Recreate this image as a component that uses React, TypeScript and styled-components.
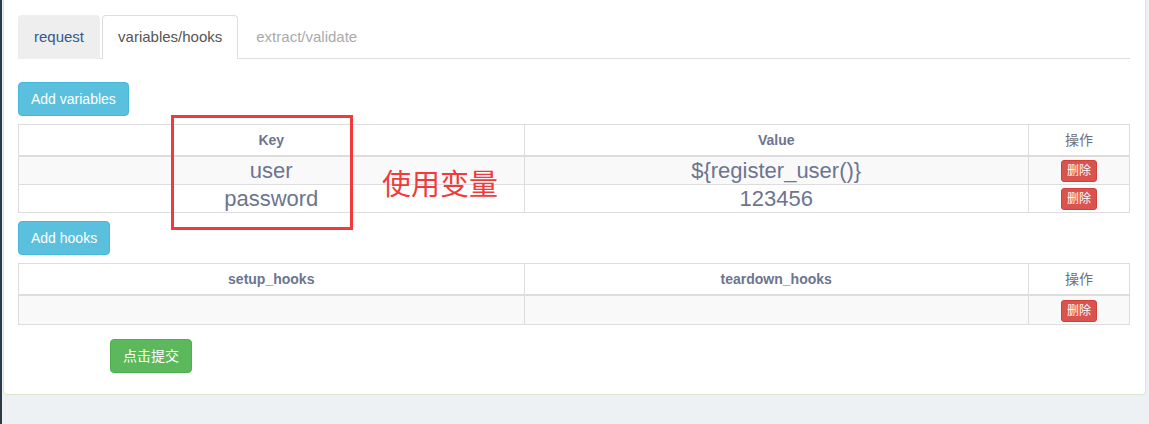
import React from 'react';
import styled, { createGlobalStyle } from 'styled-components';

const GlobalStyle = createGlobalStyle`
  html, body {
    margin: 0;
    padding: 0;
    background: #edf1f4;
  }
  body {
    font-family: "Liberation Sans", Arial, "Noto Sans CJK SC", sans-serif;
    font-size: 14px;
    line-height: 1.42857;
    color: #73879c;
  }
  * {
    box-sizing: border-box;
  }
`;

const Page = styled.div`
  position: relative;
  display: flex;
  width: 1149px;
  height: 424px;
  overflow: hidden;
`;

const Sidebar = styled.div`
  width: 2px;
  flex-shrink: 0;
  background: #2a3a47;
`;

const Main = styled.div`
  flex: 1;
  padding: 0 3px 0 1px;
`;

const Panel = styled.div`
  background: #fff;
  border: 1px solid #dbe6d0;
  border-top: none;
  border-radius: 0 0 4px 4px;
  padding: 15px 15px 21px 14px;
`;

const TabBar = styled.ul`
  display: flex;
  margin: 0;
  padding: 0;
  list-style: none;
  border-bottom: 1px solid #ddd;
`;

const Tab = styled.li<{ $state: 'idle' | 'active' | 'muted' }>`
  margin-right: 2px;
  margin-bottom: -1px;
  padding: 10px 15px;
  font-size: 15px;
  line-height: 22px;
  border: 1px solid ${(p) => (p.$state === 'active' ? '#ddd' : 'transparent')};
  border-bottom-color: ${(p) => (p.$state === 'active' ? '#fff' : 'transparent')};
  border-radius: 4px 4px 0 0;
  background: ${(p) => (p.$state === 'idle' ? '#eee' : p.$state === 'active' ? '#fff' : 'transparent')};
  color: ${(p) => (p.$state === 'idle' ? '#35598a' : p.$state === 'active' ? '#555' : '#aaa')};
`;

const TabContent = styled.div`
  padding-top: 23px;
`;

const Button = styled.button<{ $tone: 'info' | 'success' }>`
  display: block;
  height: 34px;
  padding: 6px 12px;
  font-family: inherit;
  font-size: 14px;
  line-height: 20px;
  color: #fff;
  border-radius: 4px;
  border: 1px solid ${(p) => (p.$tone === 'info' ? '#46b8da' : '#4cae4c')};
  background: ${(p) => (p.$tone === 'info' ? '#5bc0de' : '#5cb85c')};
  margin-bottom: 8px;
`;

const SubmitButton = styled(Button)`
  margin: 14px 0 0 92px;
`;

const Table = styled.table`
  width: 100%;
  table-layout: fixed;
  border-collapse: collapse;
  border: 1px solid #ddd;
  margin-bottom: 8px;
  text-align: center;

  th {
    padding: 5px;
    line-height: 20px;
    font-size: 14px;
    font-weight: bold;
    color: #6c7590;
    border: 1px solid #ddd;
    border-bottom-width: 2px;
  }
  th.op {
    font-weight: normal;
    color: #6a7080;
  }
  td {
    padding: 2px 5px;
    line-height: 22px;
    font-size: 22px;
    color: #6c7590;
    border: 1px solid #ddd;
  }
  tbody tr:nth-child(odd) td {
    background: #f9f9f9;
  }
`;

const DeleteButton = styled.span`
  display: inline-block;
  vertical-align: middle;
  padding: 1px 5px;
  font-size: 12px;
  line-height: 18px;
  color: #fff;
  background: #d9534f;
  border: 1px solid #d43f3a;
  border-radius: 3px;
`;

const Highlight = styled.div`
  position: absolute;
  left: 171px;
  top: 115px;
  width: 182px;
  height: 115px;
  border: 3px solid #f23a3a;
`;

const Note = styled.div`
  position: absolute;
  left: 382px;
  top: 167px;
  font-size: 29px;
  line-height: 36px;
  color: #f23a3a;
`;

const variables = [
  { key: 'user', value: '${register_user()}' },
  { key: 'password', value: '123456' },
];

function Cols() {
  return (
    <colgroup>
      <col style={{ width: '45.5%' }} />
      <col style={{ width: '45.4%' }} />
      <col />
    </colgroup>
  );
}

export default function App() {
  return (
    <>
      <GlobalStyle />
      <Page>
        <Sidebar />
        <Main>
          <Panel>
            <TabBar>
              <Tab $state="idle">request</Tab>
              <Tab $state="active">variables/hooks</Tab>
              <Tab $state="muted">extract/validate</Tab>
            </TabBar>
            <TabContent>
              <Button $tone="info">Add variables</Button>
              <Table>
                <Cols />
                <thead>
                  <tr>
                    <th>Key</th>
                    <th>Value</th>
                    <th className="op">操作</th>
                  </tr>
                </thead>
                <tbody>
                  {variables.map((v) => (
                    <tr key={v.key}>
                      <td>{v.key}</td>
                      <td>{v.value}</td>
                      <td>
                        <DeleteButton>删除</DeleteButton>
                      </td>
                    </tr>
                  ))}
                </tbody>
              </Table>
              <Button $tone="info">Add hooks</Button>
              <Table>
                <Cols />
                <thead>
                  <tr>
                    <th>setup_hooks</th>
                    <th>teardown_hooks</th>
                    <th className="op">操作</th>
                  </tr>
                </thead>
                <tbody>
                  <tr>
                    <td></td>
                    <td></td>
                    <td>
                      <DeleteButton>删除</DeleteButton>
                    </td>
                  </tr>
                </tbody>
              </Table>
              <SubmitButton $tone="success">点击提交</SubmitButton>
            </TabContent>
          </Panel>
        </Main>
        <Highlight />
        <Note>使用变量</Note>
      </Page>
    </>
  );
}
